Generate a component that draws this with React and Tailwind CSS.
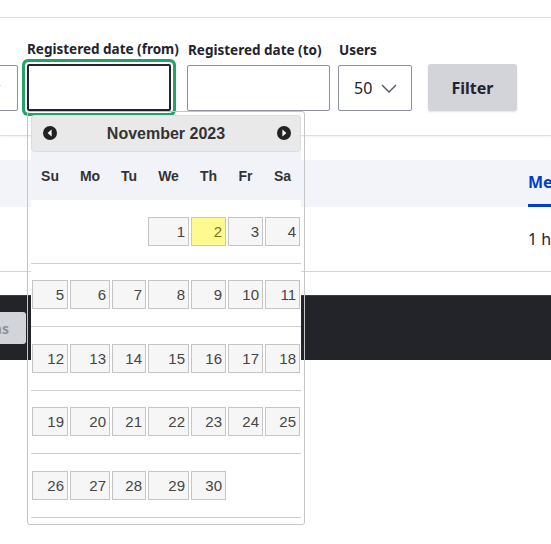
import React from "react";

function Chevron({ className }) {
  return (
    <svg className={className} width="16" height="9" viewBox="0 0 16 9" fill="none">
      <polyline points="1,1 8,8 15,1" stroke="#545560" strokeWidth="1.4" />
    </svg>
  );
}

function NavIcon({ dir }) {
  return (
    <svg width="14" height="14" viewBox="0 0 14 14">
      <circle cx="7" cy="7" r="7" fill="#222222" />
      {dir === "prev" ? (
        <polygon points="8.6,3.6 8.6,10.4 4.6,7" fill="#ffffff" />
      ) : (
        <polygon points="5.4,3.6 5.4,10.4 9.4,7" fill="#ffffff" />
      )}
    </svg>
  );
}

const cols = ["w-[38px]", "w-[42px]", "w-[36px]", "w-[43px]", "w-[37px]", "w-[37px]", "w-[37px]"];
const names = ["Su", "Mo", "Tu", "We", "Th", "Fr", "Sa"];
const weeks = [
  [null, null, null, 1, 2, 3, 4],
  [5, 6, 7, 8, 9, 10, 11],
  [12, 13, 14, 15, 16, 17, 18],
  [19, 20, 21, 22, 23, 24, 25],
  [26, 27, 28, 29, 30, null, null],
];

function Calendar() {
  return (
    <div className="absolute left-[27px] top-[111px] w-[278px] border border-[#c5c5c5] rounded-[3px] px-[3px] pt-[3px] pb-[6px] font-['Liberation_Sans',Arial,sans-serif]">
      <div className="relative flex items-center justify-center h-[37px] bg-[#e9e9e9] border border-[#dddddd] rounded-[3px] w-[270px]">
        <span className="absolute left-[11px] top-[10px] flex"><NavIcon dir="prev" /></span>
        <span className="text-[16px] font-bold text-[#333333]">November 2023</span>
        <span className="absolute left-[245px] top-[10px] flex"><NavIcon dir="next" /></span>
      </div>
      <div className="w-[270px]">
        <div className="flex h-[48px] bg-[#f2f3f8] items-center">
          {names.map((n, i) => (
            <div key={n} className={`${cols[i]} text-center text-[14px] font-bold text-[#333333]`}>{n}</div>
          ))}
        </div>
        {weeks.map((w, wi) => (
          <div key={wi} className="flex h-[63.5px] items-center border-b border-[#cfcfcf] bg-white">
            {w.map((d, i) => (
              <div key={i} className={`${cols[i]} px-[1px]`}>
                {d !== null && (
                  <div
                    className={
                      d === 2
                        ? "h-[29px] border border-[#dad55e] bg-[#fffa90] text-[#777620] text-right pr-[3px] text-[15px] leading-[27px]"
                        : "h-[29px] border border-[#c5c5c5] bg-[#f6f6f6] text-[#454545] text-right pr-[3px] text-[15px] leading-[27px]"
                    }
                  >
                    {d}
                  </div>
                )}
              </div>
            ))}
          </div>
        ))}
      </div>
    </div>
  );
}

export default function App() {
  return (
    <div className="relative w-[551px] h-[544px] overflow-hidden bg-white font-['Noto_Sans',sans-serif] text-[#222330]">
      <div className="h-[18px] border-b border-[#dcdde2]" />
      <div className="pt-[22px] pb-[24px] border-b border-[#dcdde2] shadow-[0_1px_2px_rgba(0,0,0,0.06)]">
        <div className="flex items-end gap-2 ml-[-60px] whitespace-nowrap">
          <div className="w-[78px] h-[46px] border border-[#8e929c] rounded-[2px] flex items-center justify-end pr-[16px]">
            <Chevron />
          </div>
          <div className="w-[152px] flex flex-col ml-[1px]">
            <label className="text-[13.5px] font-bold leading-[18px] mb-[6px]">Registered date (from)</label>
            <div className="w-[144px] h-[47px] border-2 border-[#222330] rounded-[2px] bg-white shadow-[0_0_0_2px_#ffffff,0_0_0_5px_#26a269]" />
          </div>
          <div className="w-[143px] flex flex-col">
            <label className="text-[13.5px] font-bold leading-[18px] mb-[6px] ml-[1px]">Registered date (to)</label>
            <div className="w-[143px] h-[46px] border border-[#8e929c] rounded-[2px] bg-white" />
          </div>
          <div className="w-[74px] flex flex-col">
            <label className="text-[13.5px] font-bold leading-[18px] mb-[6px] ml-[1px]">Users</label>
            <div className="w-[74px] h-[46px] border border-[#8e929c] rounded-[2px] flex items-center pl-[15px] gap-[9px]">
              <span className="text-[16px]">50</span>
              <Chevron />
            </div>
          </div>
          <button className="ml-[8px] w-[89px] h-[47px] bg-[#d3d4d9] rounded-[3px] text-[16px] font-bold shadow-[0_1px_2px_rgba(0,0,0,0.12)]">
            Filter
          </button>
        </div>
      </div>
      <div className="mt-[24px] h-[47px] bg-[#f3f4f9] flex whitespace-nowrap">
        <div className="ml-[528px] flex flex-col justify-end">
          <span className="text-[16px] font-bold text-[#003ecc] leading-[22px] mb-[11px]">Member for</span>
          <div className="h-[3px] bg-[#003ecc]" />
        </div>
      </div>
      <div className="h-[65px] border-b border-[#d3d4d9] flex items-center whitespace-nowrap">
        <span className="ml-[528px] text-[16px] text-[#222330]">1 hour 20 minutes</span>
      </div>
      <div className="mt-[23px] h-[65px] bg-[#232429] border-t border-[#3b3c42] flex items-center">
        <div className="ml-[-60px] w-[86px] h-[32px] bg-[#d3d4d9] rounded-[3px] flex items-center justify-end pr-[17px] text-[14px] font-bold text-[#8e9099] whitespace-nowrap">
          Actions
        </div>
      </div>
      <Calendar />
    </div>
  );
}
